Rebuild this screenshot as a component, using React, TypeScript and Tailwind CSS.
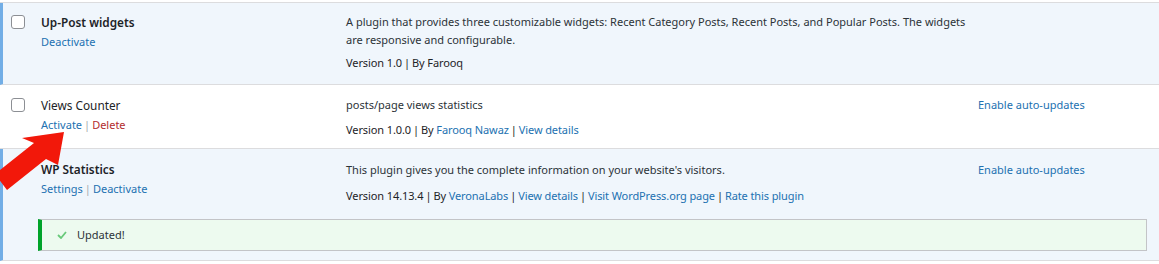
import React from 'react';

const font = { fontFamily: '"Noto Sans", "Open Sans", sans-serif' };

const Check = () => (
  <div className="w-[14px] h-[14px] rounded-[3px] border border-[#8c8f94] bg-white" />
);

// separator between links / meta items
const Sep = ({ dark }: { dark?: boolean }) => (
  <span className={`mx-[2px] ${dark ? 'text-[#1d2327]' : 'text-[#a7aaad]'}`}>|</span>
);

const Link = ({ children, red }: { children: React.ReactNode; red?: boolean }) => (
  <a className={red ? 'text-[#b32d2e]' : 'text-[#2271b1]'}>{children}</a>
);

export default function App() {
  return (
    <div className="relative w-[1159px] h-[264px] bg-white overflow-hidden text-[11px] text-[#1d2327]" style={font}>
      <div className="h-[2px] bg-white" />
      <div className="border-t border-[#dcdcde]">
        {/* Up-Post widgets - active */}
        <div className="flex h-[82px] bg-[#f0f6fc] border-l-[3px] border-[#72aee6] border-b border-b-[#dcdcde]">
          <div className="w-[32px] pl-[8px] pt-[12px]"><Check /></div>
          <div className="w-[311px] pl-[6px] pt-[9px] leading-[20px]">
            <div className="font-semibold text-[11.8px]">Up-Post widgets</div>
            <div><Link>Deactivate</Link></div>
          </div>
          <div className="w-[632px] pt-[10px]">
            <div className="leading-[18px] text-[#2c3338]">
              <div className="whitespace-nowrap">A plugin that provides three customizable widgets: Recent Category Posts, Recent Posts, and Popular Posts. The widgets</div>
              <div className="whitespace-nowrap">are responsive and configurable.</div>
            </div>
            <div className="mt-[5px] leading-[18px] tracking-[-0.1px]">Version 1.0<Sep dark />By Farooq</div>
          </div>
          <div className="flex-1" />
        </div>

        {/* Views Counter - inactive */}
        <div className="flex h-[64px] bg-white border-b border-[#dcdcde]">
          <div className="w-[35px] pl-[11px] pt-[13px]"><Check /></div>
          <div className="w-[311px] pl-[6px] pt-[10px] leading-[20px]">
            <div className="text-[11.8px]">Views Counter</div>
            <div><Link>Activate</Link><Sep /><Link red>Delete</Link></div>
          </div>
          <div className="w-[632px] pt-[11px]">
            <div className="leading-[18px] text-[#2c3338]">posts/page views statistics</div>
            <div className="mt-[7px] leading-[18px] tracking-[-0.1px]">Version 1.0.0<Sep dark />By <Link>Farooq Nawaz</Link><Sep dark /><Link>View details</Link></div>
          </div>
          <div className="flex-1 pt-[11px] leading-[18px]"><Link>Enable auto-updates</Link></div>
        </div>

        {/* WP Statistics - active */}
        <div className="flex flex-col h-[112px] bg-[#f0f6fc] border-l-[3px] border-[#72aee6] border-b border-b-[#dcdcde]">
          <div className="flex">
            <div className="w-[32px]" />
            <div className="w-[311px] pl-[6px] pt-[10px] leading-[20px]">
              <div className="font-semibold text-[11.8px]">WP Statistics</div>
              <div><Link>Settings</Link><Sep /><Link>Deactivate</Link></div>
            </div>
            <div className="w-[632px] pt-[12px]">
              <div className="leading-[18px] text-[#2c3338]">This plugin gives you the complete information on your website's visitors.</div>
              <div className="mt-[8px] leading-[18px] whitespace-nowrap tracking-[-0.1px]">
                Version 14.13.4<Sep dark />By <Link>VeronaLabs</Link><Sep dark /><Link>View details</Link><Sep dark /><Link>Visit WordPress.org page</Link><Sep dark /><Link>Rate this plugin</Link>
              </div>
            </div>
            <div className="flex-1 pt-[12px] leading-[18px]"><Link>Enable auto-updates</Link></div>
          </div>
          <div className="mt-[14px] ml-[35px] mr-[12px] h-[32px] flex items-center bg-[#edfaef] border border-[#c3c4c7] border-l-[4px] border-l-[#00a32a]">
            <svg width="10" height="8" viewBox="0 0 10 8" className="ml-[15px] mr-[10px]">
              <polyline points="1,4 4,7 9,1" fill="none" stroke="#68c97a" strokeWidth="1.8" />
            </svg>
            <span className="text-[#2c3338]">Updated!</span>
          </div>
        </div>
      </div>

      {/* red arrow overlay */}
      <svg className="absolute left-0 top-0 pointer-events-none" width="80" height="200" viewBox="0 0 80 200">
        <polygon points="64,132 22,138 34,143 -5,174 7,190 46,159 58,165" fill="#f2180a" />
      </svg>
    </div>
  );
}
